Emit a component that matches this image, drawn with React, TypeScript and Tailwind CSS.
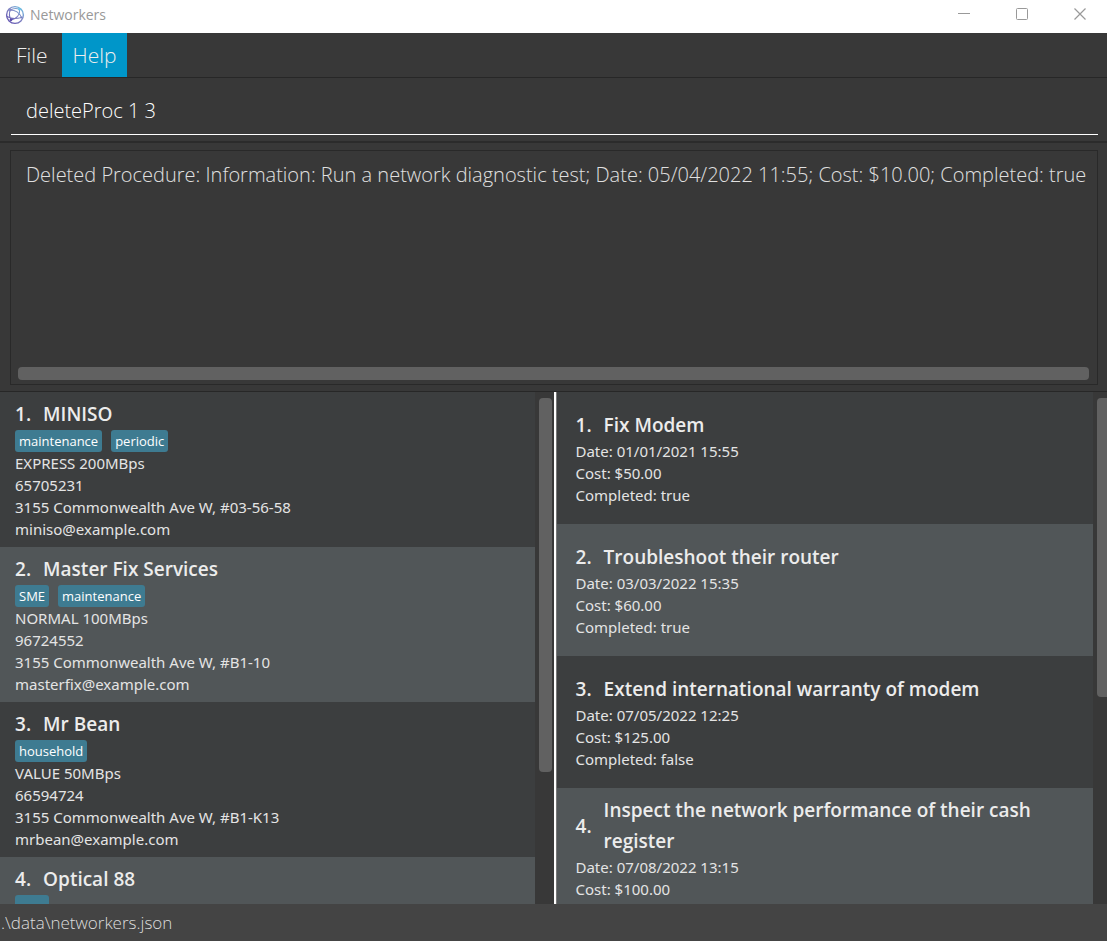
import React from "react";

type Client = { name: string; tags: string[]; plan: string; phone: string; address: string; email: string };
type Procedure = { name: string; date: string; cost: string; completed: string };

const clients: Client[] = [
  { name: "MINISO", tags: ["maintenance", "periodic"], plan: "EXPRESS 200MBps", phone: "65705231", address: "3155 Commonwealth Ave W, #03-56-58", email: "miniso@example.com" },
  { name: "Master Fix Services", tags: ["SME", "maintenance"], plan: "NORMAL 100MBps", phone: "96724552", address: "3155 Commonwealth Ave W, #B1-10", email: "masterfix@example.com" },
  { name: "Mr Bean", tags: ["household"], plan: "VALUE 50MBps", phone: "66594724", address: "3155 Commonwealth Ave W, #B1-K13", email: "mrbean@example.com" },
];

const procedures: Procedure[] = [
  { name: "Fix Modem", date: "01/01/2021 15:55", cost: "$50.00", completed: "true" },
  { name: "Troubleshoot their router", date: "03/03/2022 15:35", cost: "$60.00", completed: "true" },
  { name: "Extend international warranty of modem", date: "07/05/2022 12:25", cost: "$125.00", completed: "false" },
  { name: "Inspect the network performance of their cash register", date: "07/08/2022 13:15", cost: "$100.00", completed: "false" },
];

function GlobeLogo() {
  return (
    <svg className="size-5 shrink-0" viewBox="0 0 20 20" fill="none" aria-hidden="true">
      <defs>
        <linearGradient id="globe" x1="18" y1="2" x2="4" y2="18" gradientUnits="userSpaceOnUse">
          <stop stopColor="#6cc4e6" />
          <stop offset="0.45" stopColor="#8288c4" />
          <stop offset="1" stopColor="#6253b0" />
        </linearGradient>
      </defs>
      <g stroke="url(#globe)" strokeLinecap="round">
        <circle cx="10" cy="10" r="8.4" strokeWidth="1.4" />
        <path d="M5.2 5C10 5 14.5 8 16.5 12.5M5.2 5C3.8 8.5 4.5 12 6 14.8M14.5 4.3C15.5 9 12 14 6 14.8M2 11.5C6 13.8 12 13.8 16.5 12.5M5.2 5C8 3.4 12 3.2 14.5 4.3" strokeWidth="1.1" />
      </g>
      <g>
        <circle cx="5.2" cy="5" r="1.2" fill="#8288c4" />
        <circle cx="14.5" cy="4.3" r="1.3" fill="#6cc4e6" />
        <circle cx="6" cy="14.8" r="1.4" fill="#5a4bab" />
        <circle cx="16.5" cy="12.5" r="1.1" fill="#7680c4" />
      </g>
    </svg>
  );
}

function TitleBar() {
  return (
    <header className="flex h-[33px] shrink-0 items-start justify-between bg-white pl-[5px] text-[#999]">
      <div className="flex h-[29px] items-center gap-[5px]">
        <GlobeLogo />
        <h1 className="text-sm">Networkers</h1>
      </div>
      <div className="flex h-7 gap-3">
        <button aria-label="Minimize" className="flex w-[46px] items-center justify-center">
          <svg className="size-3" viewBox="0 0 12 12" stroke="currentColor"><path d="M0 5.5H12" /></svg>
        </button>
        <button aria-label="Maximize" className="flex w-[46px] items-center justify-center">
          <svg className="size-3" viewBox="0 0 12 12" fill="none" stroke="currentColor"><rect x="0.5" y="0.5" width="11" height="11" rx="1" /></svg>
        </button>
        <button aria-label="Close" className="mr-1 flex w-[46px] items-center justify-center">
          <svg className="size-3" viewBox="0 0 12 12" stroke="currentColor" strokeWidth="1.2"><path d="M0.5 0.5L11.5 11.5M11.5 0.5L0.5 11.5" /></svg>
        </button>
      </div>
    </header>
  );
}

function Heading({ index, name }: { index: number; name: string }) {
  return (
    <h2 className="flex items-center gap-3 font-['Open_Sans','Noto_Sans',sans-serif] text-[19px] leading-[31px] font-semibold text-[#ececec]">
      <span>{index}.</span>
      <span>{name}</span>
    </h2>
  );
}

function Tag({ children }: { children: React.ReactNode }) {
  return <span className="rounded-[3px] bg-[#3e7b91] px-1 font-['Open_Sans','Noto_Sans',sans-serif] text-[13px] leading-[22px] font-medium text-white">{children}</span>;
}

function ClientCard({ index, client }: { index: number; client: Client }) {
  return (
    <li className="px-[15px] py-[7px] odd:bg-[#3c3e3f] even:bg-[#515658]">
      <Heading index={index} name={client.name} />
      <div className="flex gap-[9px]">
        {client.tags.map((tag) => <Tag key={tag}>{tag}</Tag>)}
      </div>
      <p>{client.plan}</p>
      <p>{client.phone}</p>
      <p>{client.address}</p>
      <p>{client.email}</p>
    </li>
  );
}

function ProcedureCard({ index, procedure }: { index: number; procedure: Procedure }) {
  return (
    <li className="flex min-h-[132px] flex-col justify-center py-[7px] pr-[15px] pl-[19px] odd:bg-[#3c3e3f] even:bg-[#515658]">
      <Heading index={index} name={procedure.name} />
      <div className="-mt-px">
        <p>Date: {procedure.date}</p>
        <p>Cost: {procedure.cost}</p>
        <p>Completed: {procedure.completed}</p>
      </div>
    </li>
  );
}

export default function App() {
  return (
    <div className="flex h-screen flex-col overflow-hidden bg-[#383838] font-['Open_Sans','Noto_Sans',sans-serif]">
      <TitleBar />
      <nav className="flex h-[45px] shrink-0 border-b border-[#272727] text-[21px] leading-[43px] font-light text-[#eee]">
        <button className="pr-[14px] pl-4">File</button>
        <button className="bg-[#0096c9] px-[11px]">Help</button>
      </nav>

      <div className="shrink-0 border-b-2 border-[#2b2b2b] pt-2 pr-[9px] pb-[6px] pl-[11px]">
        <input
          aria-label="Command"
          defaultValue="deleteProc 1 3"
          className="block h-[49px] w-full border-b border-white bg-transparent px-[15px] text-xl font-light text-white outline-none"
        />
      </div>

      <section className="shrink-0 border-b border-[#272727] pt-[7px] pr-[9px] pb-[6px] pl-[10px]">
        <div className="flex flex-col border border-[#292929] pr-2 pb-1 pl-[7px]">
          <textarea
            aria-label="Result"
            readOnly
            value="Deleted Procedure: Information: Run a network diagnostic test; Date: 05/04/2022 11:55; Cost: $10.00; Completed: true"
            className="block h-[216px] resize-none overflow-hidden bg-transparent py-[9px] pl-2 text-xl leading-[30px] font-light whitespace-nowrap text-[#e0e0e0] outline-none"
          />
          <div className="h-[13px] rounded bg-[#616161]" />
        </div>
      </section>

      <main className="flex min-h-0 flex-1 font-['Noto_Sans','Open_Sans',sans-serif] text-[15px] leading-[22px] text-[#e4e4e4]">
        <section aria-label="Clients" className="flex min-w-0 flex-1 overflow-hidden">
          <ul className="min-w-0 flex-1 overflow-hidden">
            {clients.map((client, i) => <ClientCard key={client.name} index={i + 1} client={client} />)}
            <li className="px-[15px] py-[7px] even:bg-[#515658]">
              <Heading index={4} name="Optical 88" />
              <div className="h-[22px] w-[34px] rounded-[3px] bg-[#3e7b91]" />
            </li>
          </ul>
          <div className="w-[19px] pt-[6px] pr-[2px] pl-1">
            <div className="h-[74%] rounded bg-[#616161]" />
          </div>
        </section>
        <section aria-label="Procedures" className="flex min-w-0 flex-1 overflow-hidden">
          <div className="w-[3px] border-r border-[#777] bg-white" />
          <ul className="min-w-0 flex-1 overflow-hidden">
            {procedures.map((procedure, i) => <ProcedureCard key={procedure.name} index={i + 1} procedure={procedure} />)}
          </ul>
          <div className="w-[14px] pt-[6px] pl-1">
            <div className="h-[59%] rounded-l bg-[#616161]" />
          </div>
        </section>
      </main>

      <footer className="h-[37px] shrink-0 bg-[#444] px-px text-[17px] leading-[37px] font-light text-[#ddd]">.\data\networkers.json</footer>
    </div>
  );
}
